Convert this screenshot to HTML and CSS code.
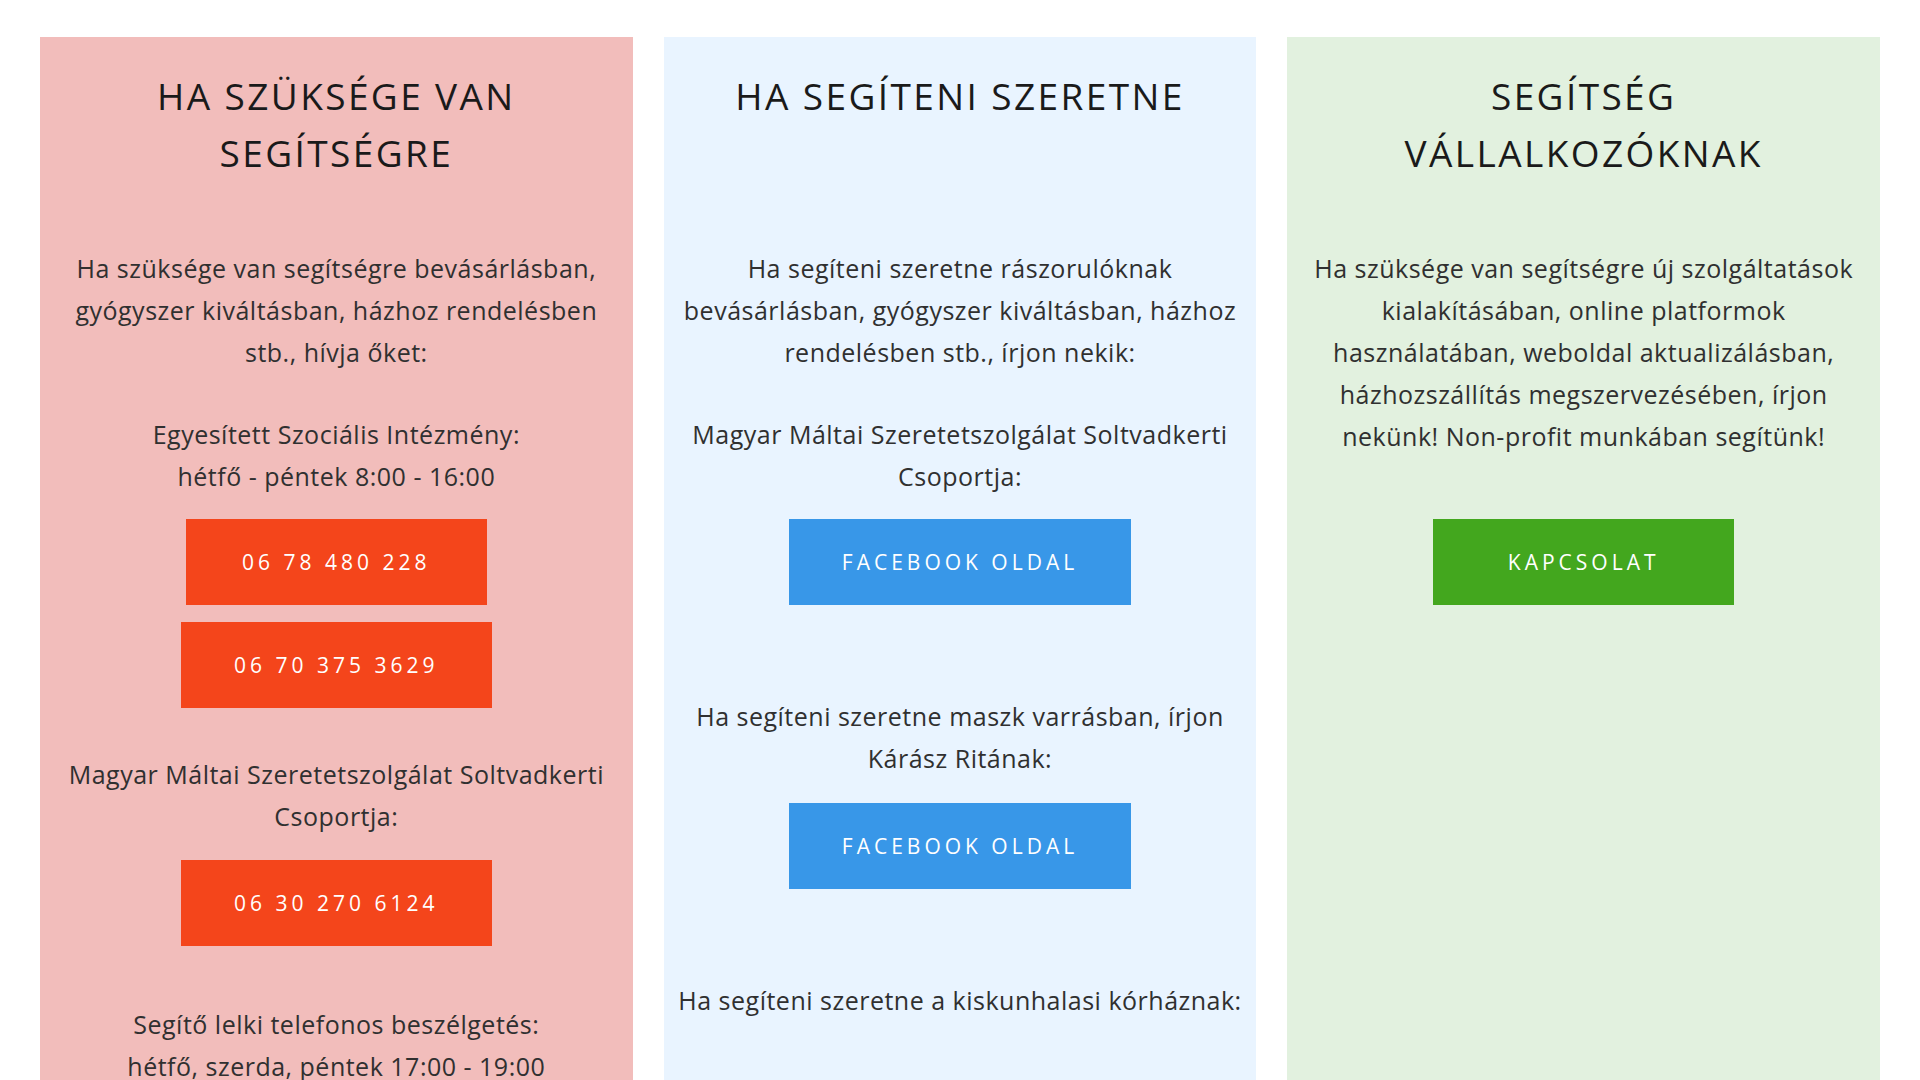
FILE: index.html
```html
<!DOCTYPE html>
<html lang="hu">
<head>
<meta charset="utf-8">
<title>Segítség</title>
<link rel="stylesheet" href="styles.css">
</head>
<body>
<main class="cols">
  <section class="col col-need">
    <h2 class="col-title">HA SZÜKSÉGE VAN SEGÍTSÉGRE</h2>
    <p class="txt mb-40">Ha szüksége van segítségre bevásárlásban, gyógyszer kiváltásban, házhoz rendelésben stb., hívja őket:</p>
    <p class="txt mb-22">Egyesített Szociális Intézmény:<br>hétfő - péntek 8:00 - 16:00</p>
    <a class="btn btn-red mb-17" href="#">06 78 480 228</a>
    <a class="btn btn-red mb-45" href="#">06 70 375 3629</a>
    <p class="txt mb-23">Magyar Máltai Szeretetszolgálat Soltvadkerti Csoportja:</p>
    <a class="btn btn-red mb-57" href="#">06 30 270 6124</a>
    <p class="txt">Segítő lelki telefonos beszélgetés:<br>hétfő, szerda, péntek 17:00 - 19:00</p>
  </section>
  <section class="col col-help">
    <h2 class="col-title">HA SEGÍTENI SZERETNE</h2>
    <p class="txt mb-40">Ha segíteni szeretne rászorulóknak bevásárlásban, gyógyszer kiváltásban, házhoz rendelésben stb., írjon nekik:</p>
    <p class="txt mb-22">Magyar Máltai Szeretetszolgálat Soltvadkerti Csoportja:</p>
    <a class="btn btn-blue mb-90" href="#">FACEBOOK OLDAL</a>
    <p class="txt mb-24">Ha segíteni szeretne maszk varrásban, írjon Kárász Ritának:</p>
    <a class="btn btn-blue mb-90" href="#">FACEBOOK OLDAL</a>
    <p class="txt">Ha segíteni szeretne a kiskunhalasi kórháznak:</p>
  </section>
  <section class="col col-biz">
    <h2 class="col-title">SEGÍTSÉG VÁLLALKOZÓKNAK</h2>
    <p class="txt mb-62">Ha szüksége van segítségre új szolgáltatások kialakításában, online platformok használatában, weboldal aktualizálásban, házhozszállítás megszervezésében, írjon nekünk! Non-profit munkában segítünk!</p>
    <a class="btn btn-green" href="#">KAPCSOLAT</a>
  </section>
</main>
</body>
</html>
```

FILE: styles.css
```css
html, body {
  margin: 0;
  padding: 0;
  background: #ffffff;
}

body {
  font-family: "Open Sans", "Noto Sans", sans-serif;
  color: #333333;
}

.cols {
  display: grid;
  grid-template-columns: repeat(3, 1fr);
  column-gap: 31px;
  margin: 37px 40px 0;
}

.col {
  display: flex;
  flex-direction: column;
  align-items: center;
  padding: 30px 14px 60px;
  text-align: center;
}

.col-need { background: #f2bdbb; }
.col-help { background: #e9f4ff; }
.col-biz  { background: #e2f1df; }

.col-title {
  margin: 0 0 66px;
  padding: 0 36px;
  min-height: 114px;
  font-size: 37px;
  font-weight: 400;
  line-height: 57px;
  color: #1a1a1a;
  letter-spacing: 2.4px;
}

.txt {
  margin: 0;
  font-size: 25px;
  line-height: 42px;
  letter-spacing: 0.5px;
  color: #303030;
}

.btn {
  display: block;
  box-sizing: border-box;
  min-width: 301px;
  height: 86px;
  padding: 0 53px;
  font-size: 21px;
  line-height: 86px;
  letter-spacing: 4px;
  font-weight: 500;
  color: #ffffff;
  text-decoration: none;
  white-space: nowrap;
}

.btn-red   { background: #f4451b; }
.btn-blue  { background: #3897e8; }
.btn-green { background: #43a71e; }

.mb-17 { margin-bottom: 17px; }
.mb-22 { margin-bottom: 22px; }
.mb-23 { margin-bottom: 23px; }
.mb-24 { margin-bottom: 24px; }
.mb-40 { margin-bottom: 40px; }
.mb-45 { margin-bottom: 45px; }
.mb-57 { margin-bottom: 57px; }
.mb-62 { margin-bottom: 62px; }
.mb-90 { margin-bottom: 90px; }
```
